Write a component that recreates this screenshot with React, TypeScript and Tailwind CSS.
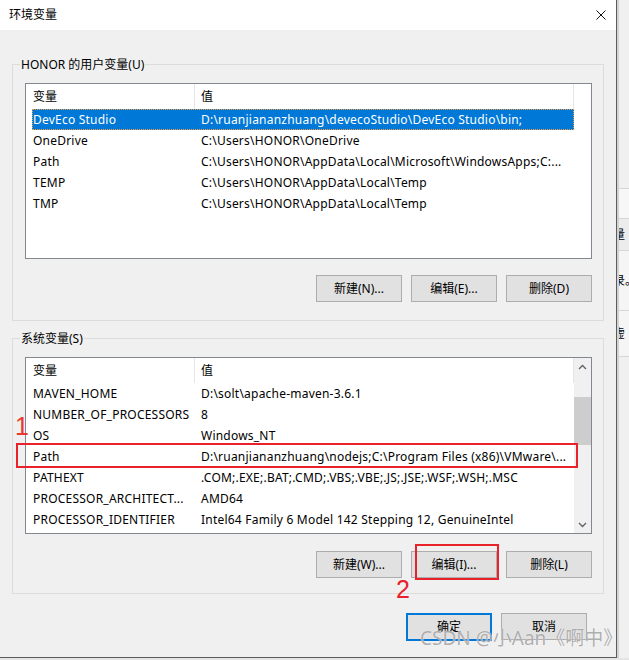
import type { ReactNode } from "react";

const userVars: [string, string][] = [
  ["DevEco Studio", "D:\\ruanjiananzhuang\\devecoStudio\\DevEco Studio\\bin;"],
  ["OneDrive", "C:\\Users\\HONOR\\OneDrive"],
  ["Path", "C:\\Users\\HONOR\\AppData\\Local\\Microsoft\\WindowsApps;C:..."],
  ["TEMP", "C:\\Users\\HONOR\\AppData\\Local\\Temp"],
  ["TMP", "C:\\Users\\HONOR\\AppData\\Local\\Temp"],
];

const systemVars: [string, string][] = [
  ["MAVEN_HOME", "D:\\solt\\apache-maven-3.6.1"],
  ["NUMBER_OF_PROCESSORS", "8"],
  ["OS", "Windows_NT"],
  ["Path", "D:\\ruanjiananzhuang\\nodejs;C:\\Program Files (x86)\\VMware\\..."],
  ["PATHEXT", ".COM;.EXE;.BAT;.CMD;.VBS;.VBE;.JS;.JSE;.WSF;.WSH;.MSC"],
  ["PROCESSOR_ARCHITECT...", "AMD64"],
  ["PROCESSOR_IDENTIFIER", "Intel64 Family 6 Model 142 Stepping 12, GenuineIntel"],
];

function GroupBox({ label, children }: { label: string; children: ReactNode }) {
  return (
    <div className="relative border border-[#dcdcdc] pl-[12px] pr-[11px] pt-[18px]">
      <span className="absolute left-[7px] -top-[8px] bg-[#f0f0f0] px-[1px] text-[12px] leading-[16px] text-black">
        {label}
      </span>
      {children}
    </div>
  );
}

function Button({ label, primary }: { label: string; primary?: boolean }) {
  return (
    <div
      className={
        primary
          ? "flex h-[28px] w-[86px] items-center justify-center border-2 border-[#0078d7] bg-[#e1e1e1] text-[12px] text-black"
          : "flex h-[27px] w-[86px] items-center justify-center border border-[#adadad] bg-[#e1e1e1] text-[12px] text-black"
      }
    >
      {label}
    </div>
  );
}

function Header() {
  return (
    <div className="flex h-[25px] text-[12px] text-black">
      <div className="flex w-[169px] items-center border-r border-[#e5e5e5] pl-[7px]">变量</div>
      <div className="flex w-[379px] items-center border-r border-[#e5e5e5] pl-[6px]">值</div>
    </div>
  );
}

function Row({ name, value, selected }: { name: string; value: string; selected?: boolean }) {
  return (
    <div
      className={
        selected
          ? "ml-[6px] flex h-[21px] w-[542px] items-center bg-[#0078d7] text-[12px] tracking-[0.22px] text-white outline-1 -outline-offset-1 outline-dotted outline-[#f0a040]"
          : "ml-[6px] flex h-[21px] w-[542px] items-center text-[12px] tracking-[0.22px] text-black"
      }
    >
      <div className="w-[162px] overflow-hidden whitespace-nowrap pl-[1px]">{name}</div>
      <div className="flex-1 overflow-hidden whitespace-nowrap pl-[7px]">{value}</div>
    </div>
  );
}

function Chevron({ up }: { up?: boolean }) {
  return (
    <svg width="9" height="6" viewBox="0 0 9 6">
      <polyline
        points={up ? "1,5 4.5,1.5 8,5" : "1,1 4.5,4.5 8,1"}
        fill="none"
        stroke="#606060"
        strokeWidth="1.3"
      />
    </svg>
  );
}

function Buttons({ labels }: { labels: string[] }) {
  return (
    <div className="flex w-[567px] justify-end gap-[9px]">
      {labels.map((l) => (
        <Button key={l} label={l} />
      ))}
    </div>
  );
}

export default function App() {
  return (
    <div className="relative h-[660px] w-[629px] overflow-hidden bg-[#e6e6e6] font-['Segoe_UI','Noto_Sans','Noto_Sans_CJK_SC',sans-serif]">
      <div className="flex h-[658px]">
        {/* dialog */}
        <div className="flex h-[658px] w-[617px] flex-col border-b border-r border-[#5c5c5c] bg-[#f0f0f0]">
          <div className="flex h-[30px] items-center justify-between bg-white pl-[9px] pr-[10px]">
            <span className="text-[12px] text-black">环境变量</span>
            <svg width="10" height="10" viewBox="0 0 10 10">
              <path d="M0.5 0.5 L9.5 9.5 M9.5 0.5 L0.5 9.5" stroke="#111" strokeWidth="1" />
            </svg>
          </div>

          <div className="flex flex-col px-[12px] pt-[34px]">
            <GroupBox label="HONOR 的用户变量(U)">
              <div className="h-[176px] w-[567px] border border-[#828790] bg-white">
                <Header />
                {userVars.map(([n, v], i) => (
                  <Row key={n} name={n} value={v} selected={i === 0} />
                ))}
              </div>
              <div className="mt-[16px] pb-[18px]">
                <Buttons labels={["新建(N)...", "编辑(E)...", "删除(D)"]} />
              </div>
            </GroupBox>

            <div className="mt-[17px]">
              <GroupBox label="系统变量(S)">
                <div className="flex h-[177px] w-[567px] border border-[#828790] bg-white">
                  <div className="w-[548px]">
                    <Header />
                    {systemVars.map(([n, v]) => (
                      <Row key={n} name={n} value={v} />
                    ))}
                  </div>
                  <div className="flex w-[17px] flex-col bg-[#f0f0f0]">
                    <div className="flex h-[17px] items-center justify-center">
                      <Chevron up />
                    </div>
                    <div className="mt-[22px] h-[48px] bg-[#cdcdcd]" />
                    <div className="flex-1" />
                    <div className="flex h-[17px] items-center justify-center">
                      <Chevron />
                    </div>
                  </div>
                </div>
                <div className="mt-[17px] pb-[15px]">
                  <Buttons labels={["新建(W)...", "编辑(I)...", "删除(L)"]} />
                </div>
              </GroupBox>
            </div>

            <div className="mt-[19px] flex justify-end gap-[9px] pr-[17px]">
              <Button label="确定" primary />
              <Button label="取消" />
            </div>
          </div>
        </div>

        {/* window behind, right edge */}
        <div className="flex w-[12px] flex-col overflow-hidden border-l-2 border-[#d2d2d2] text-[12px] text-black">
          <div className="h-[188px] bg-[#f0f0f0]" />
          <div className="h-[30px] border-t border-[#d6d6d6] bg-[#f7f7f7]" />
          <div className="flex h-[32px] items-center border-t border-[#d6d6d6] bg-[#ececec] whitespace-nowrap">
            <span className="-ml-[6px]">量</span>
          </div>
          <div className="flex h-[60px] items-center border-t border-[#d6d6d6] bg-[#f5f5f5] whitespace-nowrap">
            <span className="-ml-[6px]">录。</span>
          </div>
          <div className="flex h-[46px] items-center border-t border-[#d6d6d6] bg-[#f5f5f5] whitespace-nowrap">
            <span className="-ml-[6px]">虚</span>
          </div>
          <div className="flex-1 border-t border-[#d6d6d6] bg-[#f0f0f0]" />
        </div>
      </div>
      <div className="h-[2px] bg-[#e4e4e4]" />

      {/* annotations */}
      <div className="absolute left-[16px] top-[443px] h-[25px] w-[562px] border-2 border-[#e8212b]" />
      <div className="absolute left-[415px] top-[544px] h-[36px] w-[84px] border-2 border-[#e8212b]" />
      <span className="absolute left-[15px] top-[414px] text-[25px] leading-none text-[#e8392e] font-['Liberation_Sans',sans-serif]">
        1
      </span>
      <span className="absolute left-[396px] top-[577px] text-[25px] leading-none text-[#e8212b] font-['Liberation_Sans',sans-serif]">
        2
      </span>
      <span className="absolute left-[420px] top-[626px] whitespace-nowrap text-[19px] leading-[24px] text-[#8a8a8a]/70 [text-shadow:0_0_1px_#ffffff] font-['Noto_Sans','Noto_Sans_CJK_SC',sans-serif]">
        CSDN @小Aan《啊中》
      </span>
    </div>
  );
}
